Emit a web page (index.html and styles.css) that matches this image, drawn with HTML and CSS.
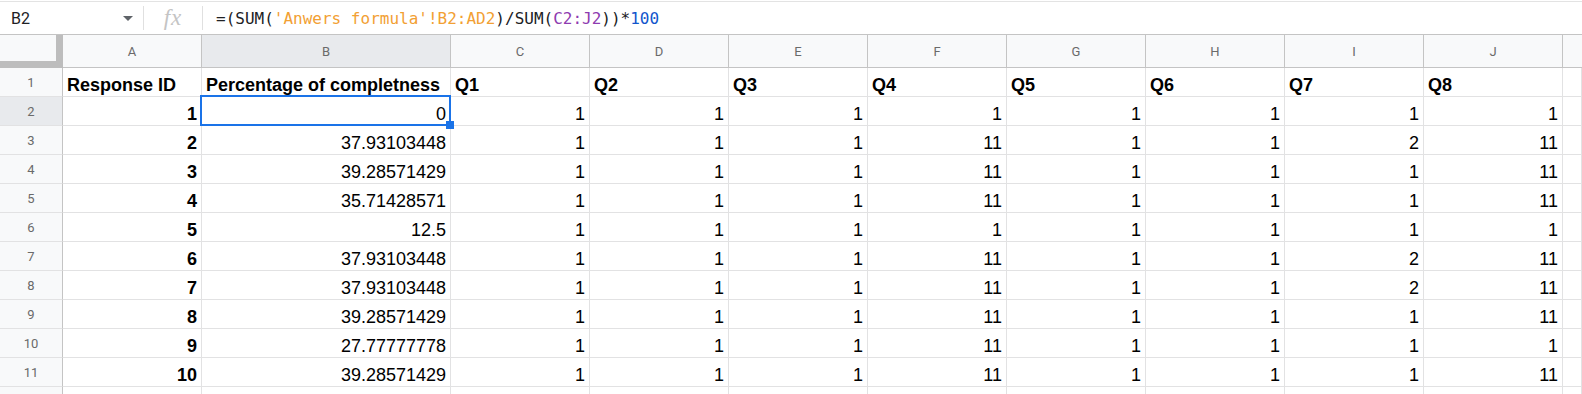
FILE: index.html
```html
<!DOCTYPE html>
<html>
<head>
<meta charset="utf-8">
<link rel="stylesheet" href="styles.css">
</head>
<body>
<div class="fbar">
  <div class="namebox"><span class="nb-text">B2</span><span class="caret"></span></div>
  <div class="sep"></div>
  <div class="fx">fx</div>
  <div class="sep"></div>
  <div class="formula">=(SUM(<span class="f-or">'Anwers formula'!B2:AD2</span>)/SUM(<span class="f-pu">C2:J2</span>))*<span class="f-bl">100</span></div>
</div>
<div class="grid" id="grid">
  <div class="corner"></div>
  <div class="ch">A</div><div class="ch sel">B</div><div class="ch">C</div><div class="ch">D</div><div class="ch">E</div><div class="ch">F</div><div class="ch">G</div><div class="ch">H</div><div class="ch">I</div><div class="ch">J</div><div class="ch last"></div>
</div>
<script src="app.js"></script>
</body>
</html>
```

FILE: app.js
```js
const rows = [
  ["Response ID", "Percentage of completness", "Q1", "Q2", "Q3", "Q4", "Q5", "Q6", "Q7", "Q8"],
  ["1", "0", 1, 1, 1, 1, 1, 1, 1, 1],
  ["2", "37.93103448", 1, 1, 1, 11, 1, 1, 2, 11],
  ["3", "39.28571429", 1, 1, 1, 11, 1, 1, 1, 11],
  ["4", "35.71428571", 1, 1, 1, 11, 1, 1, 1, 11],
  ["5", "12.5", 1, 1, 1, 1, 1, 1, 1, 1],
  ["6", "37.93103448", 1, 1, 1, 11, 1, 1, 2, 11],
  ["7", "37.93103448", 1, 1, 1, 11, 1, 1, 2, 11],
  ["8", "39.28571429", 1, 1, 1, 11, 1, 1, 1, 11],
  ["9", "27.77777778", 1, 1, 1, 11, 1, 1, 1, 1],
  ["10", "39.28571429", 1, 1, 1, 11, 1, 1, 1, 11],
  ["", "", "", "", "", "", "", "", "", ""]
];
const grid = document.getElementById("grid");
rows.forEach((r, i) => {
  const rh = document.createElement("div");
  rh.className = "rh" + (i === 1 ? " sel" : "");
  rh.textContent = i < 11 ? String(i + 1) : "";
  grid.appendChild(rh);
  r.forEach((v, j) => {
    const c = document.createElement("div");
    let cls = "cell";
    if (i === 0) cls += " head";
    else {
      cls += " num";
      if (j === 0) cls += " bold";
    }
    c.className = cls;
    c.textContent = String(v);
    if (i === 1 && j === 1) {
      const s = document.createElement("div");
      s.className = "selbox";
      const h = document.createElement("div");
      h.className = "handle";
      s.appendChild(h);
      c.appendChild(s);
    }
    grid.appendChild(c);
  });
  const e = document.createElement("div");
  e.className = "cell";
  grid.appendChild(e);
});
```

FILE: styles.css
```css
html, body {
  margin: 0;
  padding: 0;
  background: #fff;
  overflow: hidden;
  height: 394px;
}
body {
  font-family: "Liberation Sans", Arial, sans-serif;
}
.fbar {
  margin-top: 1px;
  border-top: 1px solid #e3e3e3;
  height: 32px;
  display: flex;
  align-items: center;
}
.namebox {
  width: 143px;
  display: flex;
  align-items: center;
  box-sizing: border-box;
  padding-left: 11px;
  height: 100%;
}
.nb-text {
  font-family: Roboto, "Noto Sans", sans-serif;
  font-size: 16px;
  color: #202124;
  flex: 1;
}
.caret {
  width: 0;
  height: 0;
  border-left: 5px solid transparent;
  border-right: 5px solid transparent;
  border-top: 5px solid #5f6368;
  margin-right: 10px;
}
.sep {
  width: 1px;
  height: 24px;
  background: #e0e0e0;
}
.fx {
  width: 58px;
  text-align: center;
  font-family: "Liberation Serif", serif;
  font-style: italic;
  font-size: 23px;
  color: #c4c4c4;
  letter-spacing: 1px;
}
.formula {
  padding-left: 13px;
  font-family: "DejaVu Sans Mono", "Liberation Mono", monospace;
  font-size: 16px;
  color: #202124;
  white-space: pre;
}
.f-or { color: #f2a033; }
.f-pu { color: #8e3bb0; }
.f-bl { color: #1155cc; }

.grid {
  display: grid;
  grid-template-columns: 63px 139px 249px repeat(8, 139px) 1fr;
  grid-template-rows: 33px;
  grid-auto-rows: 29px;
  border-top: 1px solid #c4c4c4;
}
.corner {
  background: #f8f9fa;
  box-sizing: border-box;
  border-right: 7px solid #bdbdbd;
  border-bottom: 7px solid #bdbdbd;
}
.ch {
  background: #f8f9fa;
  box-sizing: border-box;
  border-right: 1px solid #c4c4c4;
  border-bottom: 1px solid #c4c4c4;
  font-family: Roboto, "Noto Sans", sans-serif;
  font-size: 13px;
  color: #6a6a6a;
  display: flex;
  align-items: center;
  justify-content: center;
}
.ch.sel, .rh.sel {
  background: #e8eaed;
}
.ch.last { border-right: none; }
.rh {
  background: #f8f9fa;
  box-sizing: border-box;
  border-right: 1px solid #c4c4c4;
  border-bottom: 1px solid #e2e2e3;
  font-family: Roboto, "Noto Sans", sans-serif;
  font-size: 13px;
  color: #6a6a6a;
  display: flex;
  align-items: center;
  justify-content: center;
}
.cell {
  box-sizing: border-box;
  border-right: 1px solid #e2e2e3;
  border-bottom: 1px solid #e2e2e3;
  font-size: 18px;
  color: #000;
  display: flex;
  align-items: flex-end;
  white-space: nowrap;
  position: relative;
}
.cell.head {
  font-weight: bold;
  padding-left: 4px;
}
.cell.num {
  justify-content: flex-end;
  padding-right: 4px;
}
.cell.bold { font-weight: bold; }
.selbox {
  position: absolute;
  z-index: 2;
  left: -2px;
  top: -2px;
  width: 251px;
  height: 31px;
  box-sizing: border-box;
  border: 2px solid #1a73e8;
}
.handle {
  position: absolute;
  right: -5px;
  bottom: -5px;
  width: 8px;
  height: 8px;
  background: #1a73e8;
}
```
